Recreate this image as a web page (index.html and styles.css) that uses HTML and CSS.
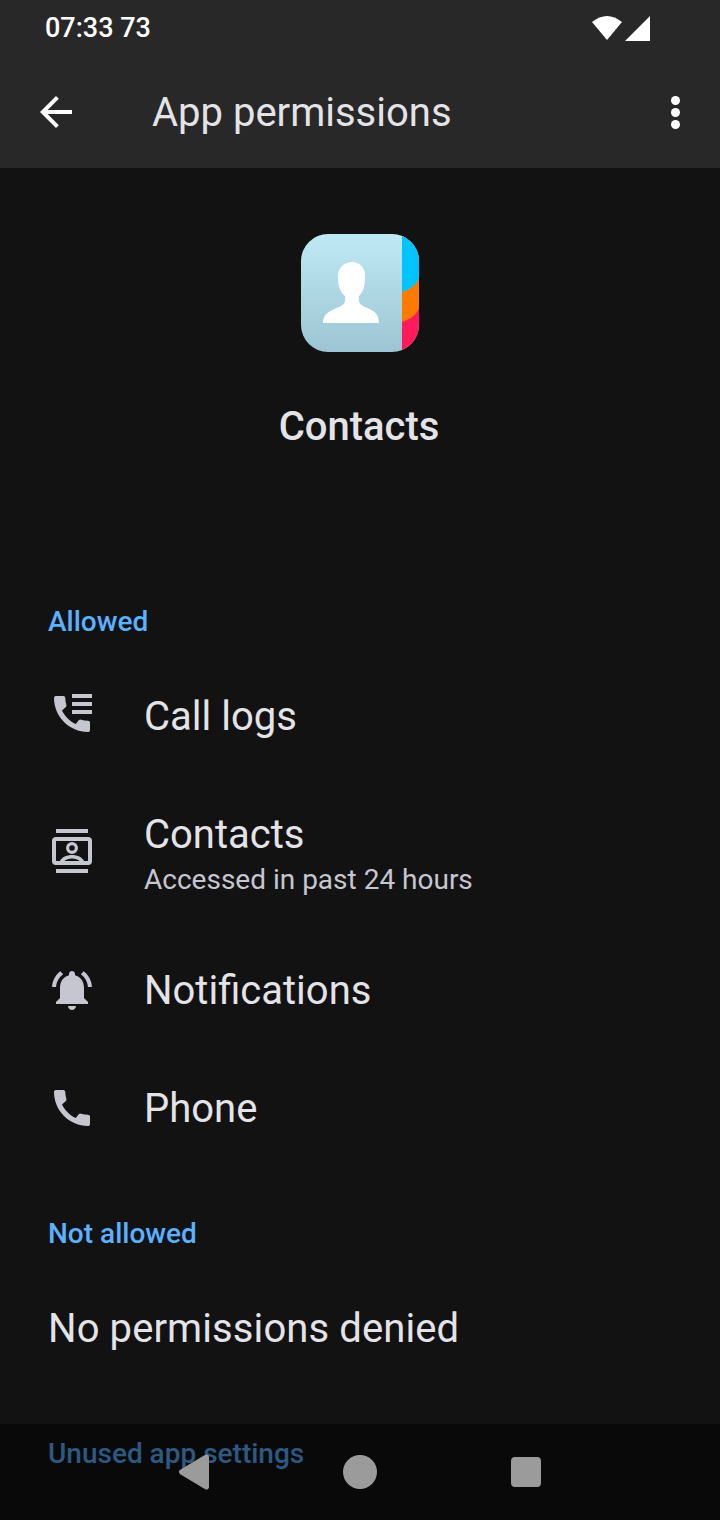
FILE: index.html
```html
<!DOCTYPE html>
<html lang="en">
<head>
    <meta charset="UTF-8">
    <meta name="viewport" content="width=device-width, initial-scale=1.0">
    <title>App permissions</title>
    <link rel="stylesheet" href="styles.css">
</head>
<body>
    <div class="screen">
        <header class="header">
            <div class="status-bar">
                <span class="status-time">07:33 73</span>
                <svg class="status-icons" width="60" height="30" viewBox="0 0 60 30">
                    <path d="M2 9Q17-3 32 9L17 27Z" fill="#fff"/>
                    <path d="M35 28L60 3V28Z" fill="#fff"/>
                </svg>
            </div>
            <div class="toolbar">
                <svg class="toolbar-back" width="48" height="48" viewBox="0 0 24 24">
                    <path d="M20 11H7.830l5.590-5.590L12 4l-8 8 8 8 1.410-1.410L7.830 13H20z" fill="#fff"/>
                </svg>
                <h1 class="toolbar-title">App permissions</h1>
                <div class="toolbar-more">
                    <span class="dot"></span>
                    <span class="dot"></span>
                    <span class="dot"></span>
                </div>
            </div>
        </header>

        <section class="app-info">
            <svg class="app-icon" width="118" height="118" viewBox="0 0 118 118">
                <defs>
                    <linearGradient id="card" x1="0" y1="0" x2="0" y2="1">
                        <stop offset="0" stop-color="#bfeaf5"/>
                        <stop offset="1" stop-color="#9dc4d2"/>
                    </linearGradient>
                    <clipPath id="tile"><rect width="118" height="118" rx="27"/></clipPath>
                </defs>
                <g clip-path="url(#tile)">
                    <rect width="118" height="118" fill="url(#card)"/>
                    <rect x="101" width="17" height="118" fill="#ff1a5c"/>
                    <path d="M101 0H118V72C118 80 108 86 101 88Z" fill="#ff7a00"/>
                    <path d="M101 0H118V42C118 50 108 56 101 58Z" fill="#00c4ff"/>
                </g>
                <path d="M22 89C22 80 28 77 38 73 43 71 45 68 44 62 39 58 37 52 37 42 37 33 44 28 51 28S64 33 64 42C64 52 62 58 58 62 57 68 59 71 64 73 74 77 78 80 78 89Z" fill="#fff"/>
            </svg>
            <h2 class="app-name">Contacts</h2>
        </section>

        <section class="perm-group">
            <h3 class="group-title">Allowed</h3>
            <div class="perm-row">
                <svg class="perm-icon" width="48" height="48" viewBox="0 0 24 24">
                    <path transform="translate(0 -1)" d="M20.010 15.380c-1.230 0-2.420-.2-3.530-.56a.977.977 0 0 0-1.010.24l-1.570 1.970c-2.830-1.350-5.480-3.900-6.890-6.830l1.950-1.660c.27-.28.35-.67.24-1.020-.37-1.110-.56-2.300-.56-3.530 0-.54-.45-.99-.99-.99H4.190C3.650 3 3 3.240 3 3.990 3 13.280 10.730 21 20.010 21c.71 0 .99-.63.99-1.180v-3.450c0-.54-.45-.99-.99-.99z"/>
                    <path d="M12 1h10v2H12zM12 5h10v2H12zM12 9h10v2H12z"/>
                </svg>
                <div class="perm-text">
                    <div class="perm-name">Call logs</div>
                </div>
            </div>
            <div class="perm-row perm-row-tall">
                <svg class="perm-icon" width="48" height="48" viewBox="0 0 24 24">
                    <path d="M4 1h16v2H4zM4 21h16v2H4z"/>
                    <rect x="3" y="6" width="18" height="12" rx="1" fill="none" stroke="#c6c6d0" stroke-width="2"/>
                    <circle cx="12" cy="10.500" r="2.200" fill="none" stroke="#c6c6d0" stroke-width="1.600"/>
                    <path d="M6 17c.9-2 3.500-3 6-3s5.100 1 6 3h-2.200c-.8-.8-2.300-1.300-3.800-1.300s-3 .5-3.800 1.300z"/>
                </svg>
                <div class="perm-text">
                    <div class="perm-name">Contacts</div>
                    <div class="perm-note">Accessed in past 24 hours</div>
                </div>
            </div>
            <div class="perm-row">
                <svg class="perm-icon" width="48" height="48" viewBox="0 0 24 24">
                    <path d="M12 22c1.100 0 2-.9 2-2h-4c0 1.100.9 2 2 2zm6-6v-5c0-3.070-1.630-5.640-4.500-6.320V4c0-.83-.67-1.500-1.500-1.500s-1.500.67-1.500 1.500v.68C7.640 5.360 6 7.920 6 11v5l-2 2v1h16v-1l-2-2zM7.580 4.080L6.150 2.650C3.750 4.480 2.170 7.300 2.030 10.500h2c.15-2.650 1.510-4.970 3.550-6.420zm12.390 6.420h2c-.15-3.200-1.730-6.020-4.120-7.850l-1.420 1.430c2.020 1.450 3.390 3.770 3.540 6.420z"/>
                </svg>
                <div class="perm-text">
                    <div class="perm-name">Notifications</div>
                </div>
            </div>
            <div class="perm-row">
                <svg class="perm-icon" width="48" height="48" viewBox="0 0 24 24">
                    <path d="M20.010 15.380c-1.230 0-2.420-.2-3.530-.56a.977.977 0 0 0-1.010.24l-1.570 1.970c-2.830-1.350-5.480-3.900-6.890-6.830l1.950-1.660c.27-.28.35-.67.24-1.020-.37-1.110-.56-2.300-.56-3.530 0-.54-.45-.99-.99-.99H4.190C3.650 3 3 3.240 3 3.990 3 13.280 10.730 21 20.010 21c.71 0 .99-.63.99-1.180v-3.450c0-.54-.45-.99-.99-.99z"/>
                </svg>
                <div class="perm-text">
                    <div class="perm-name">Phone</div>
                </div>
            </div>
        </section>

        <section class="perm-group denied">
            <h3 class="group-title">Not allowed</h3>
            <div class="empty-row">No permissions denied</div>
        </section>

        <h3 class="group-title unused">Unused app settings</h3>

        <nav class="nav-bar">
            <svg width="32" height="38" viewBox="0 0 32 38">
                <path d="M29.500 4L4.500 19 29.500 34Z" fill="#9b9b9b" stroke="#9b9b9b" stroke-width="5" stroke-linejoin="round"/>
            </svg>
            <span class="nav-home"></span>
            <span class="nav-recent"></span>
        </nav>
    </div>
</body>
</html>
```

FILE: styles.css
```css
* {
    box-sizing: border-box;
}
body {
    margin: 0;
    background-color: #121212;
    font-family: Roboto, 'Noto Sans', sans-serif;
}
h1, h2, h3 {
    margin: 0;
    font-weight: 400;
}
.screen {
    position: relative;
    width: 720px;
    height: 1520px;
    overflow: hidden;
    background-color: #121212;
}
.header {
    height: 168px;
    background-color: #282828;
}
.status-bar {
    display: flex;
    justify-content: space-between;
    align-items: center;
    height: 56px;
    padding: 0 70px 0 45px;
}
.status-time {
    color: #fff;
    font-size: 27px;
    font-weight: 500;
}
.toolbar {
    display: flex;
    align-items: center;
    height: 112px;
    padding: 0 40px 0 32px;
}
.toolbar-back {
    flex-shrink: 0;
}
.toolbar-title {
    flex: 1;
    margin-left: 72px;
    color: #e3e3e8;
    font-size: 40px;
}
.toolbar-more {
    display: flex;
    flex-direction: column;
    gap: 3px;
}
.dot {
    width: 9px;
    height: 9px;
    border-radius: 50%;
    background-color: #fff;
}
.app-info {
    display: flex;
    flex-direction: column;
    align-items: center;
    padding-top: 66px;
    height: 433px;
}
.app-name {
    margin-top: 51px;
    margin-right: 2px;
    color: #e3e3e8;
    font-size: 40px;
    font-weight: 500;
    line-height: 48px;
}
.group-title {
    padding-left: 48px;
    color: #5bb0ff;
    font-size: 28px;
    font-weight: 500;
    line-height: 42px;
}
.perm-group .group-title {
    margin-bottom: 14px;
}
.perm-row {
    display: flex;
    align-items: center;
    height: 118px;
    padding-left: 48px;
}
.perm-row-tall {
    height: 156px;
}
.perm-row-tall .perm-icon {
    margin-bottom: 4px;
}
.perm-row-tall .perm-text {
    padding-top: 4px;
}
.perm-icon {
    flex-shrink: 0;
    fill: #c6c6d0;
}
.perm-text {
    margin-left: 48px;
    padding-top: 2px;
}
.perm-name {
    color: #e3e3e8;
    font-size: 40px;
    line-height: 48px;
}
.perm-note {
    margin-top: 2px;
    color: #c6c6d0;
    font-size: 28px;
    line-height: 38px;
}
.denied {
    margin-top: 46px;
}
.denied .group-title {
    margin-bottom: 0;
}
.empty-row {
    padding: 50px 48px 0;
    color: #e3e3e8;
    font-size: 40px;
    line-height: 48px;
    letter-spacing: 0.1px;
}
.unused {
    margin-top: 80px;
}
.nav-bar {
    position: absolute;
    left: 0;
    bottom: 0;
    display: flex;
    align-items: center;
    justify-content: space-between;
    width: 100%;
    height: 96px;
    padding: 0 179px 0 177px;
    background-color: rgba(0, 0, 0, 0.5);
}
.nav-home {
    width: 34px;
    height: 34px;
    border-radius: 50%;
    background-color: #9b9b9b;
}
.nav-recent {
    width: 30px;
    height: 30px;
    border-radius: 4px;
    background-color: #9b9b9b;
}
```
